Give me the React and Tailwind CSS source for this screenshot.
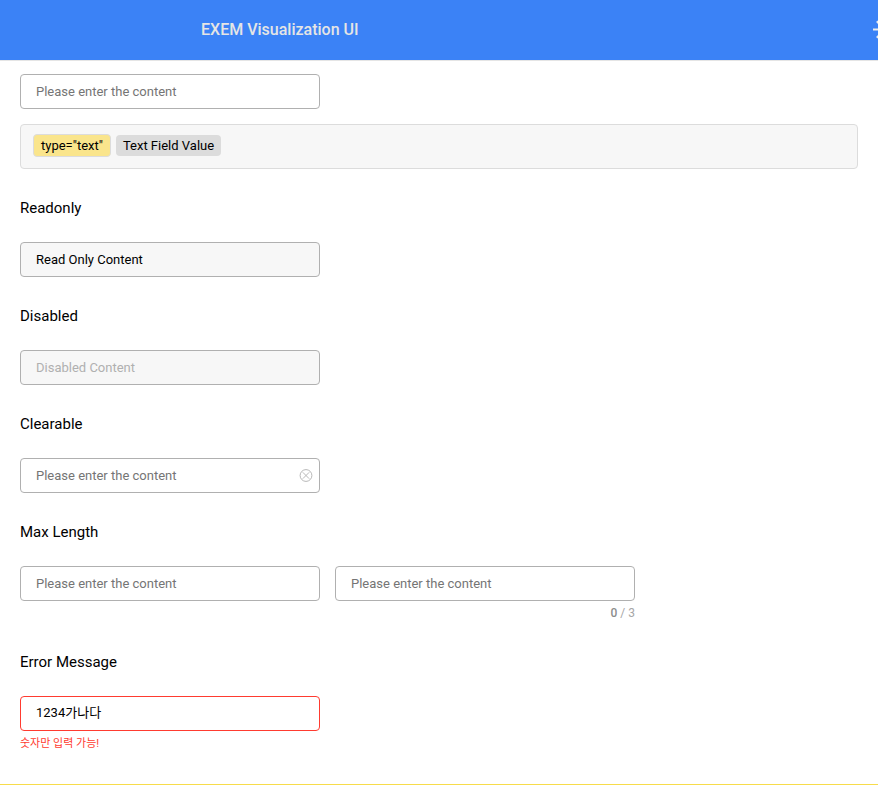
import React from "react";

const fieldBase =
  "block h-[35px] w-full rounded-[4px] border px-[15px] text-[13px] placeholder:text-[#757575] placeholder:opacity-100 outline-none";

const tones = {
  normal: "border-[#b0b0b0] bg-white text-black",
  readonly: "border-[#b0b0b0] bg-[#f7f7f7] text-black",
  disabled: "border-[#b0b0b0] bg-[#f7f7f7] text-[#b0b0b0]",
  error: "border-[#ff3b30] bg-white pb-1 text-black",
};

function TextField({ tone = "normal", children, footer, ...props }) {
  return (
    <div className="w-[300px]">
      <div className="relative">
        <input type="text" className={`${fieldBase} ${tones[tone]}`} {...props} />
        {children}
      </div>
      {footer}
    </div>
  );
}

function Section({ title, children }) {
  return (
    <section className="mt-[29px]">
      <h2 className="mb-6 text-[15px] leading-5 text-black">{title}</h2>
      <div className="flex items-start gap-[15px]">{children}</div>
    </section>
  );
}

function SunIcon() {
  return (
    <svg width="24" height="24" viewBox="0 0 24 24" fill="none" stroke="#ebebeb" strokeWidth="2" aria-hidden="true">
      <circle cx="12" cy="11.5" r="5" />
      <path d="M0 11.5h5M19 11.5h5M12 0v4.5M12 18.5v5M3.8 3.3l2 2M18.2 17.7l2 2M3.8 19.7l2-2M18.2 5.3l2-2" />
    </svg>
  );
}

function ClearIcon() {
  return (
    <svg width="14" height="13" viewBox="0 0 14 13" fill="none" stroke="#b8b8b8" strokeWidth="1" aria-hidden="true">
      <circle cx="7" cy="6.5" r="5.9" />
      <path d="M3.8 3.3l6.4 6.4M10.2 3.3l-6.4 6.4" />
    </svg>
  );
}

export default function App() {
  return (
    <div className="overflow-x-hidden bg-white font-['Roboto','Noto_Sans_CJK_KR',sans-serif] text-black">
      <header className="flex h-[61px] items-center border-b border-[#e5e5e5] bg-[#3b82f6] pl-[201px]">
        <h1 className="text-[16px] font-medium leading-6 text-[#e5e5e5]">EXEM Visualization UI</h1>
        <button type="button" aria-label="Toggle theme" className="-mr-[19px] ml-auto shrink-0">
          <SunIcon />
        </button>
      </header>
      <main className="border-b border-[#f7dc4b] px-5 pb-8 pt-[13px]">
        <TextField placeholder="Please enter the content" aria-label="Text field" />
        <div className="mt-[15px] flex h-[45px] items-start gap-[5px] rounded-[4px] border border-[#dcdcdc] bg-[#f7f7f7] px-3 pt-[9px] text-[13px]">
          <span className="flex h-[23px] items-center rounded-[4px] border border-[#dcdcdc] bg-[#fae58c] px-[7px]">type="text"</span>
          <span className="mt-px flex h-[21px] items-center rounded-[4px] bg-[#dcdcdc] px-[7px]">Text Field Value</span>
        </div>
        <Section title="Readonly">
          <TextField tone="readonly" readOnly defaultValue="Read Only Content" aria-label="Readonly" />
        </Section>
        <Section title="Disabled">
          <TextField tone="disabled" disabled defaultValue="Disabled Content" aria-label="Disabled" />
        </Section>
        <Section title="Clearable">
          <TextField placeholder="Please enter the content" aria-label="Clearable">
            <button type="button" aria-label="Clear" className="absolute inset-y-0 right-[7px] flex items-center">
              <ClearIcon />
            </button>
          </TextField>
        </Section>
        <Section title="Max Length">
          <TextField placeholder="Please enter the content" maxLength={3} aria-label="Max length" />
          <TextField
            placeholder="Please enter the content"
            maxLength={3}
            aria-label="Max length with counter"
            footer={
              <p className="mb-px mt-[3px] text-right text-[12px] leading-[18px] text-[#a6a6a6]">
                <span className="font-medium text-[#8c8c8c]">0</span> / 3
              </p>
            }
          />
        </Section>
        <Section title="Error Message">
          <TextField
            tone="error"
            defaultValue="1234가나다"
            aria-label="Error message"
            aria-invalid="true"
            footer={<p className="mt-[5px] text-[11px] leading-4 text-[#ff3b30]">숫자만 입력 가능!</p>}
          />
        </Section>
      </main>
    </div>
  );
}
